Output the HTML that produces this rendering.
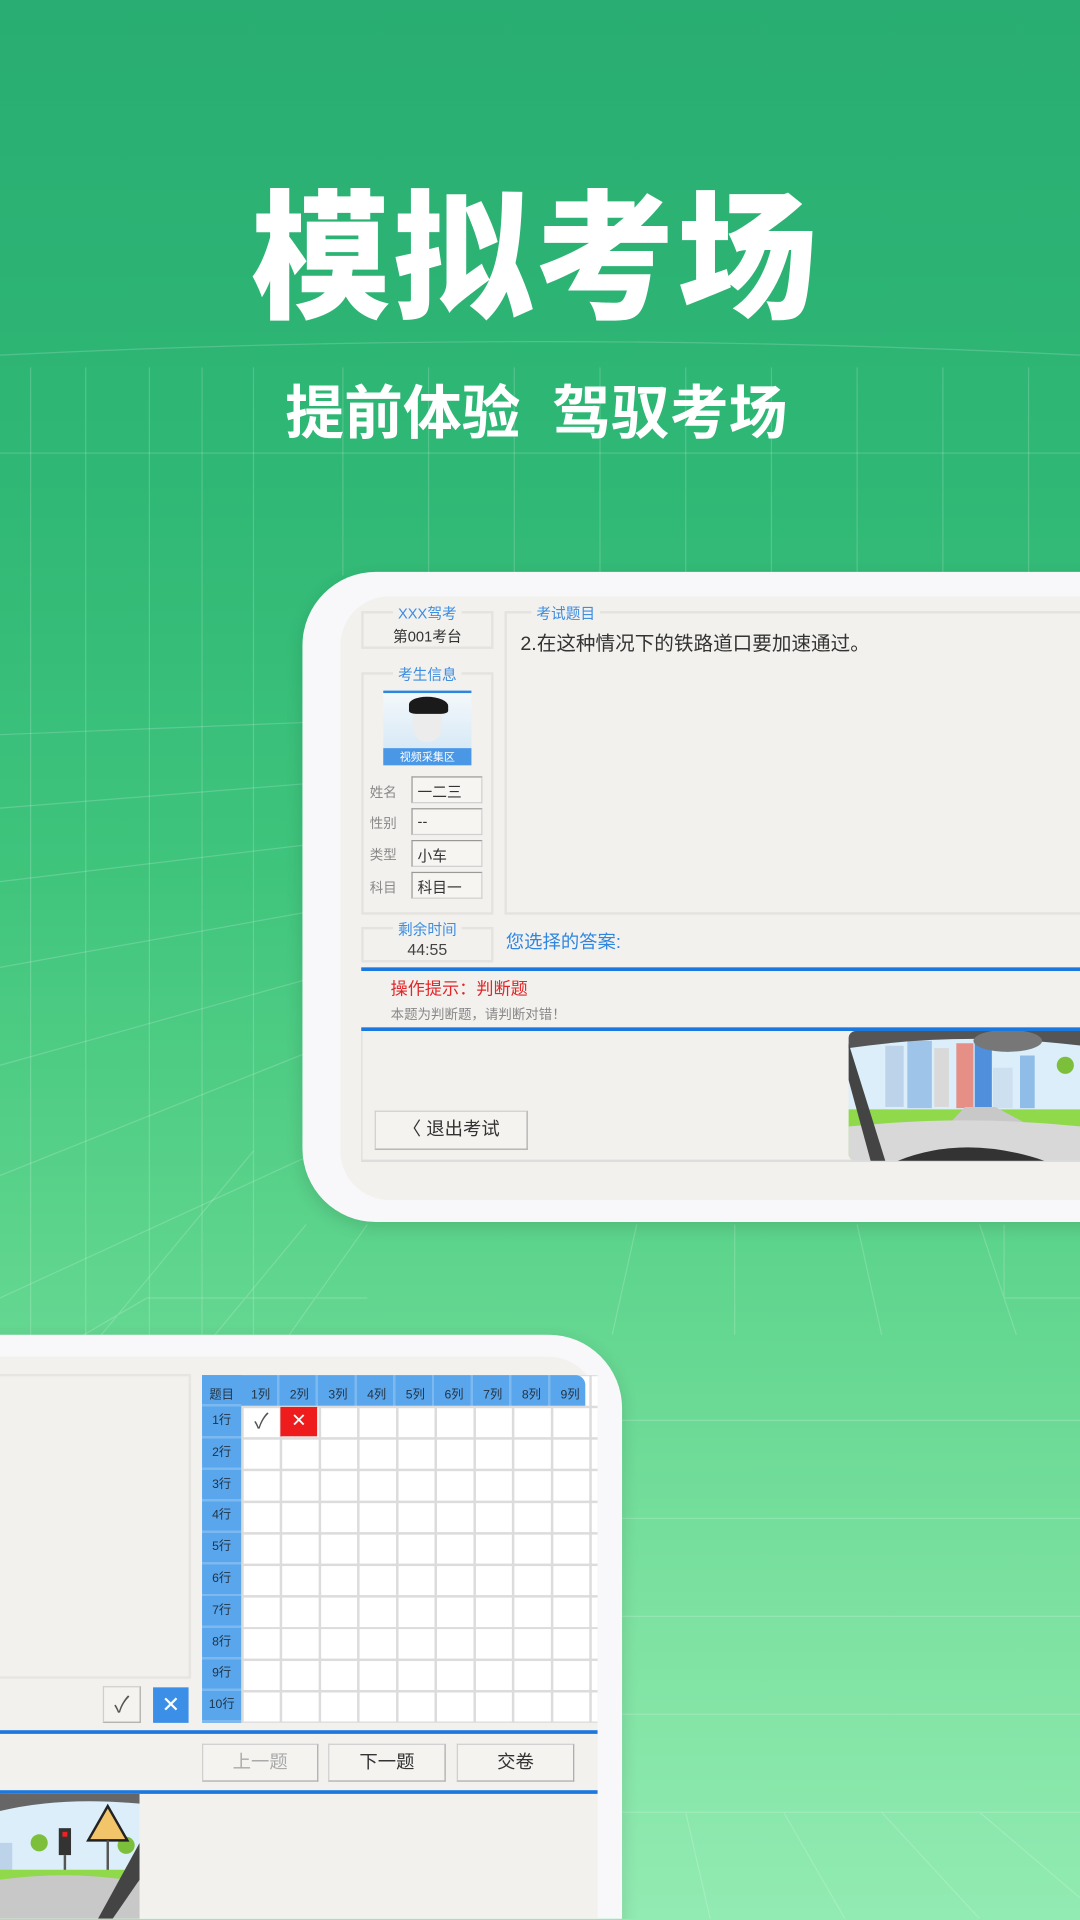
<!DOCTYPE html>
<html><head><meta charset="utf-8"><style>
*{margin:0;padding:0;box-sizing:border-box}
html,body{width:1080px;height:1920px;overflow:hidden}
#w{position:relative;width:1080px;height:1920px;overflow:hidden;background:linear-gradient(180deg,#29ad72 0%,#2fb875 25%,#3fc47c 45%,#5dd48c 65%,#7ee2a2 85%,#92ebb2 100%);font-family:"Liberation Sans","Noto Sans CJK SC",sans-serif}
#s{position:absolute;left:0;top:0;width:882px;height:1567px;overflow:hidden;transform:scale(1.22449);transform-origin:0 0}
.a{position:absolute}
.t{color:#fff;font-weight:900;white-space:nowrap}
.box{position:absolute;border:2px solid #e4e3df;background:#f2f1ee}
.lbl{position:absolute;left:0;right:0;text-align:center;color:#3d8de0;font-size:12px;top:-9px}
.lbl span{background:#f2f1ee;padding:0 4px}
.fl{position:absolute;font-size:11px;color:#888}
.fv{position:absolute;left:336px;width:58px;height:22px;border:1px solid #cfcfcf;border-top-color:#999;border-left-color:#999;font-size:12px;color:#333;padding:3px 4px;background:#f6f5f2}
.btn{position:absolute;background:#f4f3f0;border:1px solid #cfcfcf;border-right-color:#aaa;border-bottom-color:#aaa;text-align:center;font-size:15px;color:#333}
.bl{position:absolute;height:3px;background:#1a78e0}
</style></head><body><div id="w">
<div id="s">
<svg class="a" style="left:0;top:0" width="882" height="1567" stroke="#fff" stroke-opacity=".18" stroke-width="1" fill="none">
<path d="M0 290 Q441 268 882 290 M0 370 L882 370"/>
<path d="M25 300V1567 M70 300V1567 M122 300V1560 M165 300V1560 M207 300V1560 M280 300V470 M350 300V470 M420 300V470 M490 300V470 M560 300V470 M630 300V470 M700 300V470 M770 300V470 M840 300V470"/>
<path d="M0 600 L250 590 M0 660 L250 640 M0 720 L250 690 M0 790 L250 745 M0 870 L250 800 M0 960 L250 860 M0 1060 L250 945"/>
<path d="M207 940 L0 1190 M250 1000 L60 1230 M300 1000 L130 1240 M120 1060 L0 1130 M120 1060 H300 M520 1000 L500 1090 M600 1000 L600 1090 M700 1000 L720 1090 M800 1000 L830 1090 M560 1480 L580 1567 M640 1480 L690 1567 M720 1480 L800 1567 M800 1480 L882 1550 M508 1480 H882 M508 1400 H882 M508 1320 H882 M508 1240 H882 M508 1160 H882 M820 1000 V1060 M820 1060 H882"/>
</svg>
<div class="a t" style="left:205px;top:138px;font-size:114px;letter-spacing:2px;line-height:150px">模拟考场</div>
<div class="a t" style="left:233px;top:307px;font-size:48px;line-height:64px;font-weight:700">提前体验<span style="display:inline-block;width:26px"></span>驾驭考场</div>

<!-- top phone -->
<div class="a" style="left:247px;top:467px;width:700px;height:531px;background:#f8f8fa;border-radius:60px;box-shadow:0 4px 14px rgba(0,0,0,.12)"></div>
<div class="a" style="left:278px;top:487px;width:640px;height:493px;background:#f2f1ee;border-radius:40px 0 0 40px"></div>
<div class="box" style="left:295px;top:499px;width:108px;height:31px"><div class="lbl"><span>XXX驾考</span></div><div class="a" style="left:0;right:0;top:10px;text-align:center;font-size:12px;color:#333">第001考台</div></div>
<div class="box" style="left:412px;top:499px;width:480px;height:248px"><div class="a" style="left:20px;top:-9px;font-size:12px;color:#3d8de0;background:#f2f1ee;padding:0 4px">考试题目</div><div class="a" style="left:11px;top:11px;font-size:16px;color:#333;white-space:nowrap">2.在这种情况下的铁路道口要加速通过。</div></div>
<div class="box" style="left:295px;top:549px;width:108px;height:198px"><div class="lbl"><span>考生信息</span></div></div>
<div class="a" style="left:313px;top:564px;width:72px;height:61px;background:linear-gradient(#f4f8fb,#cfe5f5);border-top:2px solid #2f86e0">
<div class="a" style="left:24px;top:10px;width:24px;height:30px;background:#ececec;border-radius:40% 40% 45% 45%"></div>
<div class="a" style="left:21px;top:3px;width:32px;height:14px;background:#1a1a1a;border-radius:50% 60% 20% 20%"></div>
<div class="a" style="left:0;bottom:0;width:72px;height:14px;background:#4a97e6;color:#fff;font-size:9px;text-align:center;line-height:14px">视频采集区</div></div>
<div class="fl" style="left:302px;top:639px">姓名</div><div class="fv" style="top:634px">一二三</div>
<div class="fl" style="left:302px;top:664px">性别</div><div class="fv" style="top:660px">--</div>
<div class="fl" style="left:302px;top:690px">类型</div><div class="fv" style="top:686px">小车</div>
<div class="fl" style="left:302px;top:717px">科目</div><div class="fv" style="top:712px">科目一</div>
<div class="box" style="left:295px;top:757px;width:108px;height:29px"><div class="lbl"><span>剩余时间</span></div><div class="a" style="left:0;right:0;top:9px;text-align:center;font-size:13px;color:#444">44:55</div></div>
<div class="a" style="left:413px;top:758px;font-size:15px;color:#2f86e0">您选择的答案:</div>
<div class="bl" style="left:295px;top:790px;width:600px"></div>
<div class="a" style="left:319px;top:797px;font-size:14px;color:#e3262a">操作提示：判断题</div>
<div class="a" style="left:319px;top:820px;font-size:11px;color:#888">本题为判断题，请判断对错！</div>
<div class="bl" style="left:295px;top:839px;width:600px"></div>
<div class="a" style="left:295px;top:842px;width:600px;height:107px;border-left:1px solid #ddd;border-bottom:2px solid #ddd"></div>
<div class="btn" style="left:306px;top:907px;width:125px;height:32px;line-height:30px">〈 退出考试</div>
<svg class="a" style="left:693px;top:842px;border-radius:6px 0 0 6px" width="190" height="106">
<rect width="190" height="106" fill="#dbeefa"/>
<rect x="30" y="12" width="15" height="50" fill="#bcd3ea"/><rect x="48" y="8" width="20" height="55" fill="#9ec4ea"/><rect x="70" y="14" width="12" height="48" fill="#d9d9d9"/><rect x="88" y="10" width="14" height="53" fill="#e58f86"/><rect x="103" y="6" width="14" height="57" fill="#4f8fdc"/><rect x="118" y="30" width="16" height="33" fill="#cde0f0"/><rect x="140" y="20" width="12" height="43" fill="#8fbde8"/>
<circle cx="177" cy="28" r="7" fill="#7cbf3a"/>
<path d="M0 64 H190 V105 H0Z" fill="#8fd94a"/><path d="M55 105 L95 62 H120 L190 100 V105Z" fill="#c8c8c8"/>
<path d="M0 0 H190 V12 Q95 0 0 14Z" fill="#555"/><ellipse cx="130" cy="8" rx="28" ry="9" fill="#777"/>
<path d="M0 78 Q95 68 190 78 V106 H0Z" fill="#d8d8d8"/><path d="M0 10 L30 106 H18 L0 40Z" fill="#444"/>
<path d="M40 106 Q95 84 160 106Z" fill="#333"/>
</svg>

<!-- bottom phone -->
<div class="a" style="left:-100px;top:1090px;width:608px;height:560px;background:#f8f8fa;border-radius:60px;box-shadow:0 4px 14px rgba(0,0,0,.12)"></div>
<div class="a" style="left:-60px;top:1108px;width:548px;height:480px;background:#f2f1ee;border-radius:0 40px 0 0"></div>
<div class="a" style="left:-5px;top:1122px;width:161px;height:249px;border:2px solid #e6e5e1"></div>
<div class="btn" style="left:84px;top:1377px;width:31px;height:30px;line-height:28px;font-size:18px;color:#555">✓</div>
<div class="a" style="left:125px;top:1378px;width:29px;height:29px;background:#3b8fe6;color:#fff;text-align:center;line-height:29px;font-size:18px">✕</div>
<div class="a" style="left:165px;top:1123px;width:323px;height:284px;background-color:#fff;background-image:repeating-linear-gradient(90deg,#dcdcdc 0 2px,transparent 2px 31.6px),repeating-linear-gradient(180deg,#dcdcdc 0 2px,transparent 2px 25.8px);background-position:32px 0,0 25px"></div>
<div class="a" style="left:165px;top:1123px;width:313px;height:25px;background:repeating-linear-gradient(90deg,#5aa6ec 0 29.6px,#7bb9f0 29.6px 31.6px);border-top-right-radius:8px"></div>
<div class="a" style="left:165px;top:1123px;width:32px;height:284px;background:repeating-linear-gradient(180deg,#5aa6ec 0 23.8px,#7bb9f0 23.8px 25.8px)"></div>
<div class="a" style="left:165px;top:1130px;font-size:10px;color:#234;display:flex;white-space:nowrap">
<span style="width:32px;text-align:center">题目</span><span style="width:31.6px;text-align:center">1列</span><span style="width:31.6px;text-align:center">2列</span><span style="width:31.6px;text-align:center">3列</span><span style="width:31.6px;text-align:center">4列</span><span style="width:31.6px;text-align:center">5列</span><span style="width:31.6px;text-align:center">6列</span><span style="width:31.6px;text-align:center">7列</span><span style="width:31.6px;text-align:center">8列</span><span style="width:31.6px;text-align:center">9列</span></div>
<div class="a" style="left:165px;top:1148px;width:32px;font-size:10px;color:#234;text-align:center;line-height:25.8px">1行<br>2行<br>3行<br>4行<br>5行<br>6行<br>7行<br>8行<br>9行<br>10行</div>
<div class="a" style="left:199px;top:1149px;width:29px;height:24px;text-align:center;font-size:17px;color:#555;line-height:24px">✓</div>
<div class="a" style="left:229px;top:1149px;width:30px;height:24px;background:#ee1c1c;text-align:center;color:#fff;font-size:15px;line-height:24px">✕</div>
<div class="bl" style="left:-10px;top:1413px;width:498px"></div>
<div class="btn" style="left:165px;top:1424px;width:95px;height:31px;line-height:29px;color:#aaa">上一题</div>
<div class="btn" style="left:268px;top:1424px;width:96px;height:31px;line-height:29px">下一题</div>
<div class="btn" style="left:373px;top:1424px;width:96px;height:31px;line-height:29px">交卷</div>
<div class="bl" style="left:-10px;top:1462px;width:498px"></div>
<svg class="a" style="left:0;top:1465px" width="114" height="102">
<rect width="114" height="102" fill="#dbeefa" rx="6"/>
<rect x="0" y="40" width="10" height="25" fill="#bcd3ea"/>
<circle cx="32" cy="40" r="7" fill="#7cbf3a"/><circle cx="103" cy="42" r="7" fill="#7cbf3a"/>
<rect x="48" y="28" width="10" height="22" fill="#333"/><rect x="51" y="31" width="4" height="4" fill="#e22"/><rect x="52" y="50" width="2" height="30" fill="#555"/>
<path d="M88 10 L104 38 H72Z" fill="#f3c56b" stroke="#222" stroke-width="2"/><rect x="87" y="38" width="2" height="40" fill="#555"/>
<path d="M0 62 H114 V102 H0Z" fill="#8fd94a"/><path d="M0 70 Q60 62 114 72 L114 102 H0Z" fill="#c8c8c8"/>
<path d="M0 0 H114 V8 Q50 2 0 14Z" fill="#666"/><path d="M114 40 L80 102 H92 L114 70Z" fill="#444"/>
</svg>
</div>
</div></body></html>
